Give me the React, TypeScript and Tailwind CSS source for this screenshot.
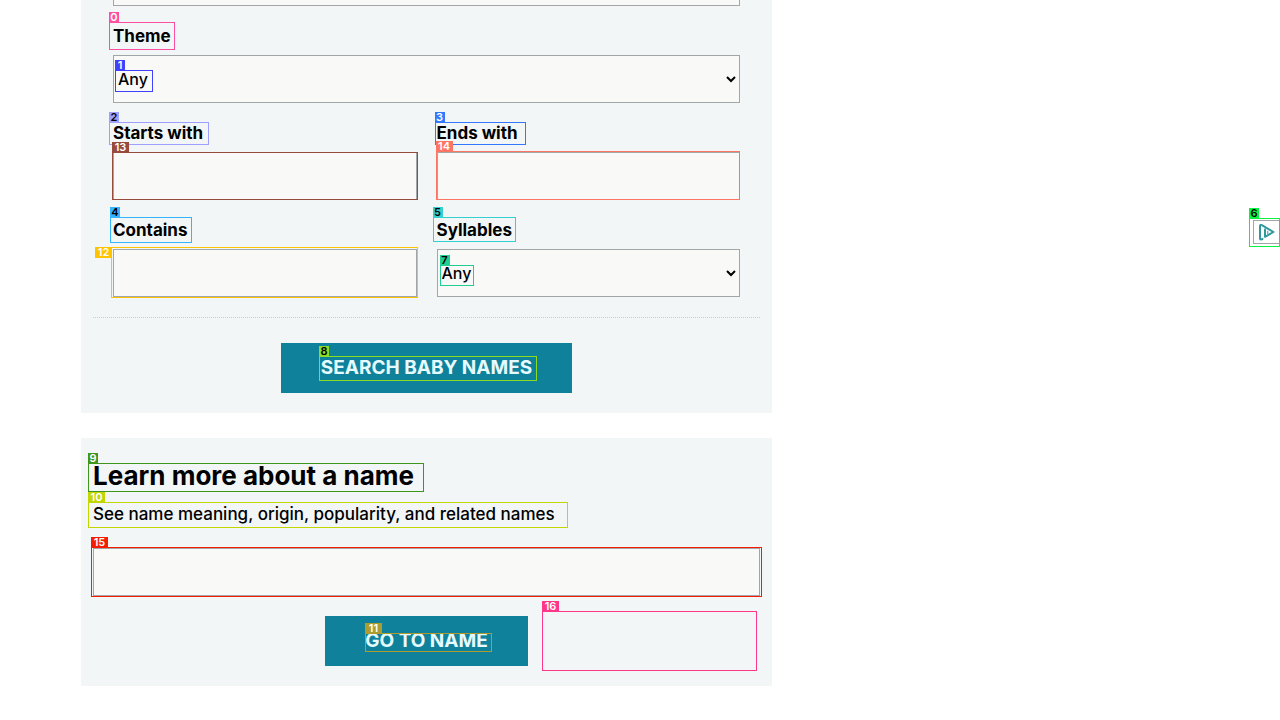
import type { ReactNode } from "react";

type MarkProps = { n: number; box: string; tag: string; tagPlace?: string };

/** Numbered outline laid over its nearest positioned ancestor. */
function Mark({ n, box, tag, tagPlace = "bottom-full -left-px" }: MarkProps) {
  return (
    <span aria-hidden="true" className={`pointer-events-none absolute border ${box}`}>
      <span
        className={`absolute flex h-[11px] items-center justify-center text-[11px] leading-none font-semibold ${
          n > 9 ? "w-[17px]" : "w-[10px]"
        } ${tagPlace} ${tag}`}
      >
        {n}
      </span>
    </span>
  );
}

const control =
  "block h-12 w-full rounded-none border border-[#a3a6a7] bg-[#f9faf8] text-base font-medium text-black outline-none";

type FieldProps = { id: string; label: string; labelMark: ReactNode; children: ReactNode };

function Field({ id, label, labelMark, children }: FieldProps) {
  return (
    <div>
      <div className="mb-[7px] flex">
        <label htmlFor={id} className="relative text-[17px] leading-6 font-bold">
          {label}
          {labelMark}
        </label>
      </div>
      <div className="relative">{children}</div>
    </div>
  );
}

const button =
  "h-[50px] bg-[#10819a] text-[19px] leading-6 font-bold text-[#e6fbff] uppercase";

export default function App() {
  return (
    <div className="min-h-screen bg-white font-['Inter','Noto_Sans',sans-serif] text-black">
      <main className="w-full max-w-[772px] pl-[81px]">
        <form className="bg-[#f2f6f7] px-3 pb-5" onSubmit={(e) => e.preventDefault()}>
          <div className="px-5">
            <div className="flex h-[6px] items-end overflow-hidden">
              <select aria-label="Origin" className={`${control} shrink-0`} />
            </div>
            <div className="grid gap-[18px] pt-[18px] pb-5">
              <Field
                id="theme"
                label="Theme"
                labelMark={
                  <Mark n={0} box="-left-1 -top-[2px] h-7 w-[66px] border-[#ff4fa3]" tag="bg-[#ff4fa3] text-white" />
                }
              >
                <select id="theme" className={control}>
                  <option>Any</option>
                </select>
                <Mark n={1} box="left-[2px] top-[15px] h-[22px] w-[38px] border-[#4040ff]" tag="bg-[#4040ff] text-white" />
              </Field>
              <div className="grid grid-cols-2 gap-x-5 gap-y-[18px]">
                <Field
                  id="starts"
                  label="Starts with"
                  labelMark={
                    <Mark n={2} box="-left-1 top-px h-[23px] w-[100px] border-[#9f9fff]" tag="bg-[#9f9fff] text-black" />
                  }
                >
                  <input id="starts" type="text" className={control} />
                  <Mark n={13} box="-left-px -right-px inset-y-0 border-[#984a3c]" tag="bg-[#984a3c] text-white" />
                </Field>
                <Field
                  id="ends"
                  label="Ends with"
                  labelMark={
                    <Mark n={3} box="-left-[2px] top-px h-[23px] w-[91px] border-[#3478ff]" tag="bg-[#3478ff] text-white" />
                  }
                >
                  <input id="ends" type="text" className={control} />
                  <Mark n={14} box="-left-px right-0 -top-px bottom-0 border-[#ff7565]" tag="bg-[#ff7565] text-white" />
                </Field>
                <Field
                  id="contains"
                  label="Contains"
                  labelMark={
                    <Mark n={4} box="-left-[3px] -top-px h-[26px] w-[82px] border-[#35b4ff]" tag="bg-[#35b4ff] text-black" />
                  }
                >
                  <input id="contains" type="text" className={control} />
                  <Mark
                    n={12}
                    box="-left-[2px] -right-px -top-[2px] -bottom-px border-[#ffc400]"
                    tag="bg-[#ffc400] text-white"
                    tagPlace="right-full -top-px"
                  />
                </Field>
                <Field
                  id="syllables"
                  label="Syllables"
                  labelMark={
                    <Mark n={5} box="-left-1 -top-px h-[25px] w-[83px] border-[#34cfcf]" tag="bg-[#34cfcf] text-black" />
                  }
                >
                  <select id="syllables" className={control}>
                    <option>Any</option>
                  </select>
                  <Mark n={7} box="left-[3px] top-4 h-[21px] w-[34px] border-[#1fce90]" tag="bg-[#1fce90] text-black" />
                </Field>
              </div>
            </div>
          </div>
          <div className="flex justify-center border-t border-dotted border-[#c9cdcf] pt-[25px]">
            <button type="submit" className={`${button} relative w-[291px]`}>
              Search baby names
              <Mark n={8} box="left-[38px] top-[13px] h-[25px] w-[218px] border-[#8bdd24]" tag="bg-[#8bdd24] text-black" />
            </button>
          </div>
        </form>

        <form className="mt-[25px] bg-[#f2f6f7] px-3 pt-[22px] pb-5" onSubmit={(e) => e.preventDefault()}>
          <h2 className="relative text-[26px] leading-8 font-bold">
            Learn more about a name
            <Mark n={9} box="-left-[5px] top-[3px] h-[29px] w-[336px] border-[#3f961c]" tag="bg-[#3f961c] text-white" />
          </h2>
          <p className="relative mt-[10px] text-[17px] leading-6 font-medium">
            See name meaning, origin, popularity, and related names
            <Mark n={10} box="-left-[5px] top-0 h-[26px] w-[480px] border-[#c2d600]" tag="bg-[#c2d600] text-white" />
          </p>
          <div className="relative mt-[22px]">
            <input type="text" aria-label="Name" className={control} />
            <Mark n={15} box="-inset-x-[2px] -top-px -bottom-px border-[#f51c00]" tag="bg-[#f51c00] text-white" />
          </div>
          <div className="relative mt-5 flex justify-center">
            <button type="submit" className={`${button} relative w-[203px]`}>
              Go to name
              <Mark n={11} box="left-10 top-[17px] h-[19px] w-[127px] border-[#ae9c30]" tag="bg-[#ae9c30] text-white" />
            </button>
            <Mark n={16} box="right-[3px] -top-[5px] h-[60px] w-[215px] border-[#ff3788]" tag="bg-[#ff3788] text-white" />
          </div>
        </form>
      </main>

      <aside className="absolute top-[218px] right-0 h-[29px] w-[31px] pt-[2px] pl-1">
        <a
          href="#adchoices"
          aria-label="AdChoices"
          className="flex h-6 items-center justify-center border border-r-0 border-[#a3a6a7] bg-white"
        >
          <svg viewBox="0 0 18 18" className="size-[18px]" fill="none" stroke="#2f989d" strokeWidth="2" strokeLinejoin="round" strokeLinecap="round">
            <path d="M4.5 16L3 16.6Q2 16.5 2 15.5V3Q2.2 1.4 3.8 2.1L15.5 9L7 13.8V6.5" />
            <path d="M9.8 8.2V10.6" strokeWidth="1" />
          </svg>
        </a>
        <Mark n={6} box="inset-0 border-[#09f43e]" tag="bg-[#09f43e] text-black" />
      </aside>
    </div>
  );
}
